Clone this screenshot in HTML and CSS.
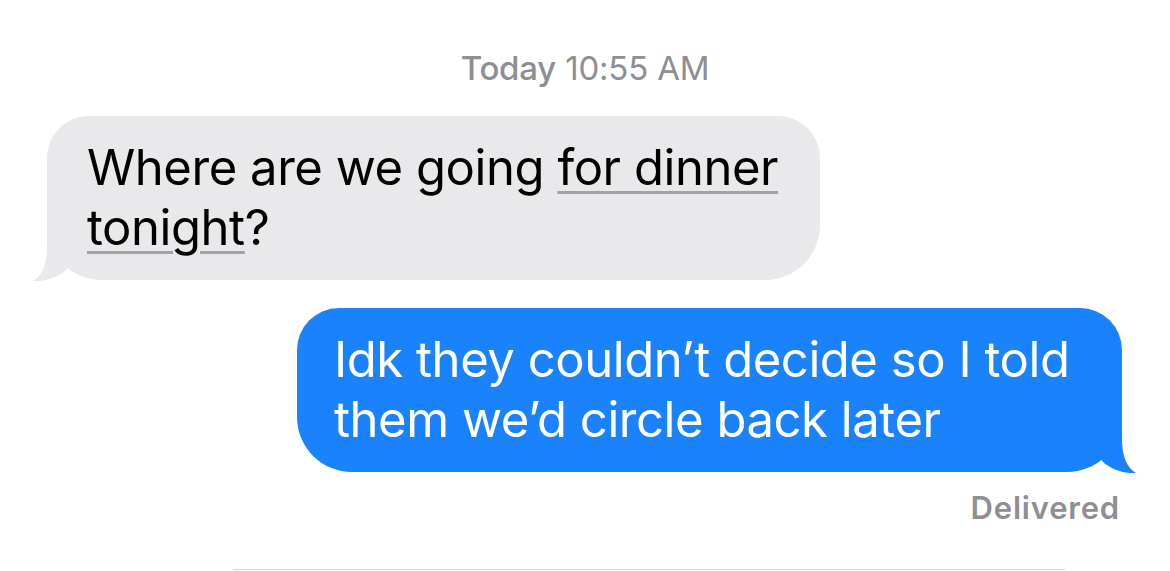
FILE: index.html
```html
<!DOCTYPE html>
<html lang="en">
<head>
<meta charset="utf-8">
<title>Messages</title>
<link rel="stylesheet" href="styles.css">
</head>
<body>
<main class="thread">
  <p class="stamp"><span class="day">Today</span> 10:55 AM</p>

  <div class="row row-in">
    <div class="bubble bubble-in">
      Where are we going <span class="detected">for dinner</span> <span class="detected">tonight</span>?
      <svg class="tail tail-in" viewBox="0 0 60 80" aria-hidden="true">
        <path d="M16 20 L16 45 C16 62 12 74 2 80 C14 81 28 76 36 68 L40 30 L30 20 Z"/>
      </svg>
    </div>
  </div>

  <div class="row row-out">
    <div class="bubble bubble-out">
      Idk they couldn’t decide so I told them we’d circle back later
      <svg class="tail tail-out" viewBox="0 0 60 80" aria-hidden="true">
        <path d="M16 20 L16 45 C16 62 12 74 2 80 C14 81 28 76 36 68 L40 30 L30 20 Z"/>
      </svg>
    </div>
  </div>

  <p class="status">Delivered</p>

  <div class="composer-edge"></div>
</main>
</body>
</html>
```

FILE: styles.css
```css
html, body {
  margin: 0;
  padding: 0;
  background: #ffffff;
}

body {
  font-family: "Inter", "Roboto", "Liberation Sans", sans-serif;
  width: 1170px;
  height: 571px;
  overflow: hidden;
}

.thread {
  display: flex;
  flex-direction: column;
  padding: 46px 0 0;
}

.stamp {
  margin: 0;
  text-align: center;
  font-size: 33px;
  line-height: 44px;
  color: #8e8e93;
  letter-spacing: -0.2px;
}

.stamp .day {
  font-weight: 500;
}

.row {
  display: flex;
}

.row-in {
  justify-content: flex-start;
  padding-left: 47px;
  margin-top: 26px;
}

.row-out {
  justify-content: flex-end;
  padding-right: 48px;
  margin-top: 28px;
}

.bubble {
  position: relative;
  box-sizing: border-box;
  font-size: 49px;
  line-height: 60px;
  letter-spacing: -0.45px;
  border-radius: 42px;
  border-bottom-left-radius: 55px;
  border-bottom-right-radius: 55px;
}

.bubble-in {
  width: 773px;
  height: 164px;
  padding: 22px 20px 22px 40px;
  background: #e9e9eb;
  color: #000000;
}

.bubble-out {
  width: 825px;
  height: 164px;
  padding: 22px 20px 22px 37px;
  background: #1a83fb;
  color: #ffffff;
}

.detected {
  text-decoration: underline;
  text-decoration-color: #a2a2a7;
  text-decoration-thickness: 3px;
  text-underline-offset: 6px;
  text-decoration-skip-ink: auto;
}

/* Tail sits on the bubble's bottom corner */
.tail {
  position: absolute;
  bottom: -1px;
  width: 60px;
  height: 80px;
}

.tail-in {
  left: -16px;
  fill: #e9e9eb;
}

.tail-out {
  right: -16px;
  fill: #1a83fb;
  transform: scaleX(-1);
}

.status {
  margin: 18px 50px 0 0;
  text-align: right;
  font-size: 31px;
  line-height: 36px;
  font-weight: 600;
  letter-spacing: 0.8px;
  color: #8e8e93;
}

.composer-edge {
  margin: 43px 105px 0 233px;
  height: 1px;
  background: #d6d6d6;
}
```
